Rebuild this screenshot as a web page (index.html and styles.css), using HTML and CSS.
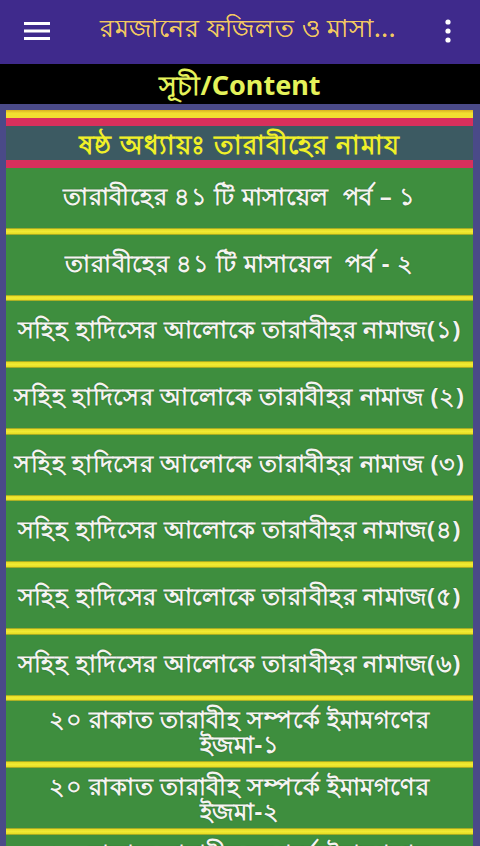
FILE: index.html
```html
<!DOCTYPE html>
<html lang="bn">
<head>
<meta charset="utf-8">
<link rel="stylesheet" href="styles.css">
</head>
<body>
<div class="screen">
  <header class="appbar">
    <div class="menu-btn">
      <svg width="26" height="20" viewBox="0 0 26 20"><rect x="0" y="1" width="26" height="3" fill="#fff"/><rect x="0" y="8.5" width="26" height="3" fill="#fff"/><rect x="0" y="16" width="26" height="3" fill="#fff"/></svg>
    </div>
    <div class="app-title">রমজানের ফজিলত ও মাসা...</div>
    <div class="more-btn">
      <svg width="8" height="24" viewBox="0 0 8 24"><circle cx="4" cy="3" r="2.6" fill="#fff"/><circle cx="4" cy="12" r="2.6" fill="#fff"/><circle cx="4" cy="21" r="2.6" fill="#fff"/></svg>
    </div>
  </header>
  <div class="toc-title">সূচী/Content</div>
  <main class="panel">
    <div class="stripe-yellow"></div>
    <div class="stripe-red"></div>
    <div class="chapter">ষষ্ঠ অধ্যায়ঃ তারাবীহের নামায</div>
    <div class="stripe-red"></div>
    <ul class="list">
      <li class="item">তারাবীহের ৪১ টি মাসায়েল&nbsp; পর্ব – ১</li>
      <li class="sep"></li>
      <li class="item">তারাবীহের ৪১ টি মাসায়েল&nbsp; পর্ব - ২</li>
      <li class="sep"></li>
      <li class="item">সহিহ হাদিসের আলোকে তারাবীহর নামাজ(১)</li>
      <li class="sep"></li>
      <li class="item">সহিহ হাদিসের আলোকে তারাবীহর নামাজ (২)</li>
      <li class="sep"></li>
      <li class="item">সহিহ হাদিসের আলোকে তারাবীহর নামাজ (৩)</li>
      <li class="sep"></li>
      <li class="item">সহিহ হাদিসের আলোকে তারাবীহর নামাজ(৪)</li>
      <li class="sep"></li>
      <li class="item">সহিহ হাদিসের আলোকে তারাবীহর নামাজ(৫)</li>
      <li class="sep"></li>
      <li class="item">সহিহ হাদিসের আলোকে তারাবীহর নামাজ(৬)</li>
      <li class="sep"></li>
      <li class="item two">২০ রাকাত তারাবীহ সম্পর্কে ইমামগণের ইজমা-১</li>
      <li class="sep"></li>
      <li class="item two">২০ রাকাত তারাবীহ সম্পর্কে ইমামগণের ইজমা-২</li>
      <li class="sep"></li>
      <li class="item two">২০ রাকাত তারাবীহ সম্পর্কে ইমামগণের ইজমা-৩</li>
    </ul>
  </main>
</div>
</body>
</html>
```
FILE: styles.css
```css
html, body {
  margin: 0;
  padding: 0;
  background: #000;
}
.screen {
  width: 480px;
  height: 846px;
  overflow: hidden;
  font-family: "Noto Sans", "Liberation Sans", sans-serif;
}
.appbar {
  height: 64px;
  background: #3f2a8c;
  display: flex;
  align-items: center;
}
.menu-btn {
  width: 74px;
  padding-left: 24px;
  box-sizing: border-box;
  display: flex;
  align-items: center;
  margin-top: -2px;
}
.app-title {
  flex: 1;
  text-align: center;
  color: #f2c862;
  font-size: 25px;
  letter-spacing: 0.7px;
  margin-top: -4px;
  white-space: nowrap;
  text-shadow: 0 0 0.6px #f2c862;
}
.more-btn {
  width: 58px;
  display: flex;
  justify-content: center;
  padding-right: 6px;
  box-sizing: border-box;
  margin-top: -3px;
}
.toc-title {
  height: 40px;
  background: #000;
  color: #e4f25a;
  font-weight: bold;
  font-size: 27px;
  text-align: center;
  line-height: 42px;
}
.panel {
  background: #4a4a88;
  padding: 6px 7px 0 6px;
  height: 742px;
  box-sizing: border-box;
}
.stripe-yellow {
  height: 8px;
  background: linear-gradient(#d8b020, #f2e030 40%, #f0e030);
}
.stripe-red {
  height: 8px;
  background: #d8305c;
}
.chapter {
  height: 34px;
  background: #3c5a62;
  color: #f0f028;
  font-weight: bold;
  font-size: 26px;
  letter-spacing: 1px;
  text-align: center;
  line-height: 36px;
}
.list {
  list-style: none;
  margin: 0;
  padding: 0;
}
.item {
  height: 60px;
  background: #3e8e3e;
  color: #f4f4f0;
  font-weight: bold;
  font-size: 24px;
  letter-spacing: 0.6px;
  display: flex;
  align-items: center;
  justify-content: center;
  text-align: center;
  white-space: nowrap;
  text-shadow: 0 0 1px #1a4a1a;
}
.item.two {
  white-space: normal;
  line-height: 25px;
  padding: 0 20px;
}
.sep {
  height: 6.67px;
  background: linear-gradient(#7c8a24 0, #e6de24 18%, #f2ea34 50%, #e6de24 82%, #7c8a24 100%);
}
```
